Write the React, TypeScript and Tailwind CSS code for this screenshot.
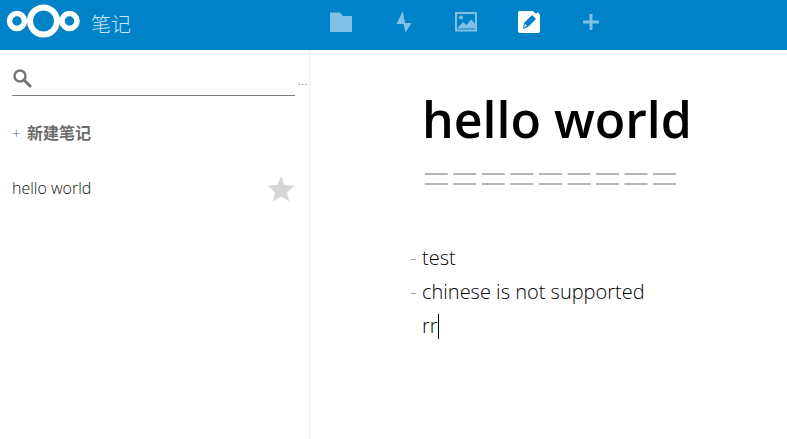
const navIcons = [
  { label: 'folder', active: false },
  { label: 'activity', active: false },
  { label: 'gallery', active: false },
  { label: 'notes', active: true },
  { label: 'add', active: false },
];

function NavIcon({ label }: { label: string }) {
  if (label === 'folder') {
    return (
      <svg width="24" height="24" viewBox="0 0 24 24" fill="currentColor">
        <path d="M1 2.6h10l3 3.4h9v16H1z" />
      </svg>
    );
  }
  if (label === 'activity') {
    return (
      <svg width="24" height="24" viewBox="0 0 24 24" fill="currentColor">
        <path d="M10.8 1L4.5 14h7l2 8.5 6-9.5H13z" />
      </svg>
    );
  }
  if (label === 'gallery') {
    return (
      <svg width="24" height="24" viewBox="0 0 24 24" fill="currentColor">
        <path fillRule="evenodd" d="M1 2h22v19.500H1zM3 4v15.500h18V4z" />
        <circle cx="7" cy="7.500" r="2" />
        <path d="M3 18.500l6-6.500 3.500 3 4.500-5.500 4 4v5z" />
      </svg>
    );
  }
  if (label === 'notes') {
    return (
      <svg width="24" height="24" viewBox="0 0 24 24">
        <path fill="#fff" d="M3 1h15l-2 0 3 3 2-2 2 3v16a2 2 0 0 1-2 2H3a2 2 0 0 1-2-2V3a2 2 0 0 1 2-2z" />
        <path fill="#0082c9" d="M15 5l4 4-8 8-5 2 1-6zM8 14l-1 3 3-1z" />
      </svg>
    );
  }
  return (
    <svg width="24" height="24" viewBox="0 0 24 24" fill="currentColor">
      <path d="M10.500 4h3v6.500H20v3h-6.500V20h-3v-6.500H4v-3h6.500z" />
    </svg>
  );
}

function Logo() {
  return (
    <svg width="74" height="34" viewBox="0 0 74 34" fill="none" stroke="#fff">
      <circle cx="11" cy="17" r="7.500" strokeWidth="5.500" />
      <circle cx="37.500" cy="17" r="13.500" strokeWidth="6" />
      <circle cx="63.500" cy="17" r="7.500" strokeWidth="5.500" />
    </svg>
  );
}

export default function App() {
  return (
    <div className="w-[787px] h-[439px] overflow-hidden flex flex-col bg-white font-['Open_Sans','Noto_Sans_CJK_SC',sans-serif]">
      <header className="h-[50px] shrink-0 bg-[#0082c9] flex items-center relative">
        <div className="ml-[6px] mt-[-8px] flex items-center">
          <Logo />
        </div>
        <span className="ml-[11px] text-[20px] font-light text-[#cfe6f4]">笔记</span>
        <nav className="absolute left-[310px] top-0 h-[44px] flex items-center">
          {navIcons.map(icon => (
            <div
              key={icon.label}
              className={`w-[62.5px] flex justify-center ${icon.active ? 'text-white' : 'text-[#7fc0e4]'}`}
            >
              <NavIcon label={icon.label} />
            </div>
          ))}
        </nav>
      </header>
      <div className="flex-1 flex min-h-0">
        <aside className="w-[310px] shrink-0 border-r border-[#eeeeee] relative">
          <div className="mx-[12px] w-[283px] h-[33px] mt-[13px] border-b border-[#7f7f7f] flex items-center">
            <svg width="20" height="20" viewBox="0 0 20 20" fill="none" stroke="#757575" className="mt-[-3px]">
              <circle cx="8" cy="8" r="5.500" strokeWidth="2.400" />
              <path d="M12 12l6 6" strokeWidth="3" strokeLinecap="round" />
            </svg>
          </div>
          <span className="absolute left-[298px] top-[23px] text-[13px] leading-[14px] font-light text-[#666]">...</span>
          <div className="mt-[25px] ml-[12px] flex items-center h-[24px] text-[#6b6b6b]">
            <span className="text-[15px] font-light w-[15px]">+</span>
            <span className="text-[16px] font-bold">新建笔记</span>
          </div>
          <div className="mt-[29px] mx-[12px] w-[283px] flex items-center justify-between h-[30px]">
            <span className="text-[16px] font-light text-[#111] mt-[-2px]">hello world</span>
            <svg width="28" height="28" viewBox="0 0 24 24" fill="#d6d6d6">
              <path d="M12 1l3.200 7.600 8.300.7-6.300 5.400 1.900 8.100L12 18.500l-7.100 4.300 1.900-8.100L.5 9.300l8.300-.7z" />
            </svg>
          </div>
        </aside>
        <main className="flex-1 pl-[112px]">
          <h1 className="mt-[39px] text-[50px] leading-[60px] font-semibold text-black whitespace-nowrap">hello world</h1>
          <div className="mt-[4px] text-[50px] leading-[50px] font-light text-[#b5b5b5] whitespace-nowrap">=========</div>
          <div className="mt-[38px] text-[20px] font-light leading-[34px] text-black">
            <div className="relative"><span className="absolute left-[-12px] text-[#999]">-</span>test</div>
            <div className="relative"><span className="absolute left-[-12px] text-[#999]">-</span>chinese is not supported</div>
            <div className="flex items-center">rr<span className="w-px h-[25px] bg-black" /></div>
          </div>
        </main>
      </div>
    </div>
  );
}
